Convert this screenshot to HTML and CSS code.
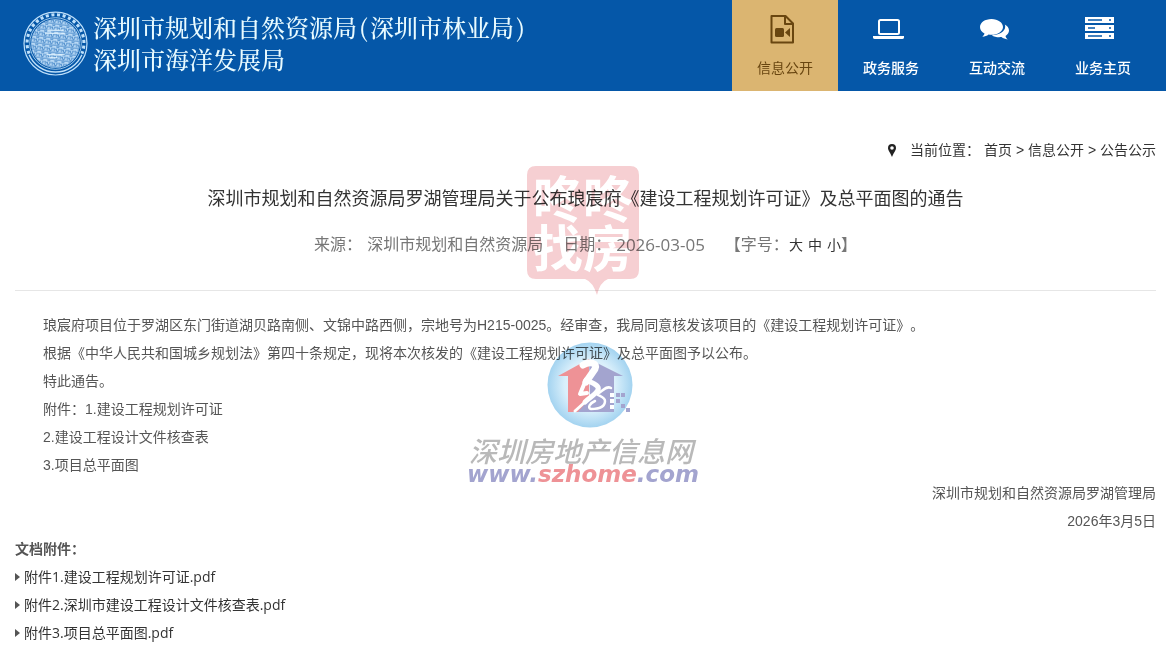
FILE: index.html
```html
<!DOCTYPE html>
<html lang="zh-CN">
<head>
<meta charset="utf-8">
<meta name="viewport" content="width=device-width, initial-scale=1">
<title>深圳市规划和自然资源局</title>
<link rel="stylesheet" href="styles.css">
</head>
<body>
<header class="site-header">
  <a class="brand" href="#">
    <svg class="seal" viewBox="0 0 64 64" aria-hidden="true">
      <defs>
        <pattern id="script" width="7" height="7" patternUnits="userSpaceOnUse" patternTransform="rotate(8)">
          <path d="M0 1h3v2h2v-2h2M1 5h2v1.500h2v-2h2M4 0v1.500M0 4h1v3M3 4v1" fill="none" stroke="#3f83c6" stroke-width=".8"/>
        </pattern>
      </defs>
      <g fill="none" stroke="#bfe0fa">
        <circle cx="32" cy="32" r="31" stroke-width="1.2"/>
        <circle cx="32" cy="32" r="25.4" stroke-width=".8"/>
        <path d="M6 42A28 28 0 1 1 58 42" stroke-width="3" stroke-dasharray="3 2.6"/>
        <path d="M6 43A28.300 28.300 0 0 0 58 43" stroke-width="1.400"/>
      </g>
      <circle cx="32" cy="32" r="24" fill="#b9d9f5"/>
      <circle cx="32" cy="32" r="24" fill="url(#script)"/>
      <path d="M24 19h16M22 22h19M23 43h18M25 46h9" stroke="#e6f6ff" stroke-width="1"/>
    </svg>
    <span class="brand-text">
      <span>深圳市规划和自然资源局<span class="paren">(</span>深圳市林业局<span class="paren">)</span></span>
      <span>深圳市海洋发展局</span>
    </span>
  </a>
  <nav class="main-nav">
    <a class="nav-item active" href="#">
      <svg viewBox="3 -1 32 32" aria-hidden="true"><path d="M5.500 3h14L27 10.500V29.500H5.500zM19 3v8h8" fill="none" stroke="currentColor" stroke-width="2" stroke-linejoin="round"/><rect x="9" y="15" width="9" height="9" rx="1.500" fill="currentColor"/><path d="M19 19.500l5-4.500v9z" fill="currentColor"/></svg>
      <span>信息公开</span>
    </a>
    <a class="nav-item" href="#">
      <svg viewBox="2 0 32 32" aria-hidden="true"><rect x="6" y="8" width="20" height="14" rx="1.500" fill="none" stroke="currentColor" stroke-width="2"/><path d="M0 24h31v1.500q0 1.500-3 1.500H3q-3 0-3-1.500z" fill="currentColor"/></svg>
      <span>政务服务</span>
    </a>
    <a class="nav-item" href="#">
      <svg viewBox="2 -1 32 32" aria-hidden="true"><path d="M12.500 6C6 6 1 9.600 1 14c0 2.700 1.700 5 4.500 6.500-.3 1.400-1.200 2.400-2.200 3.300 2.500-.1 4.700-1 6.300-2.300q1.400.3 2.900.3C19 21.800 24 18.300 24 14S19 6 12.500 6z" fill="currentColor"/><path d="M25.800 11.500c2.600 1.400 4.200 3.500 4.200 5.900 0 2.200-1.300 4.100-3.500 5.500.3 1.400 1.200 2.600 2.200 3.500-2.500-.1-4.600-1-6.200-2.300-3.600.5-7.200-.2-9.700-1.900 7.200 0 13.400-3.700 13.400-8.500q0-1.100-.4-2.200z" fill="currentColor"/></svg>
      <span>互动交流</span>
    </a>
    <a class="nav-item" href="#">
      <svg viewBox="3 0 32 32" aria-hidden="true"><path d="M1 5h29v6H1zM1 13h29v6H1zM1 21h29v6H1z" fill="currentColor"/><path d="M4 8h14M4 16h7M4 24h14M25 8h2M25 16h2M25 24h2" stroke="#0557a8" stroke-width="1.500"/></svg>
      <span>业务主页</span>
    </a>
  </nav>
</header>

<main class="page">
  <nav class="crumbs" aria-label="当前位置">
    <svg class="pin" viewBox="0 0 8 13" aria-hidden="true"><path d="M4 0a4 4 0 0 0-4 4c0 2.500 2.200 4.500 4 9 1.800-4.500 4-6.500 4-9a4 4 0 0 0-4-4zm0 2.200a1.800 1.800 0 1 1 0 3.600 1.800 1.800 0 0 1 0-3.600z" fill="#222" fill-rule="evenodd"/></svg>
    <span class="crumb-label">当前位置：</span>
    <a href="#">首页</a><span class="sep">&gt;</span><a href="#">信息公开</a><span class="sep">&gt;</span><a href="#">公告公示</a>
  </nav>

  <article>
    <h1>深圳市规划和自然资源局罗湖管理局关于公布琅宸府《建设工程规划许可证》及总平面图的通告</h1>
    <div class="meta">
      <span class="meta-pair"><span>来源：</span><span>深圳市规划和自然资源局</span></span>
      <span class="meta-pair"><span>日期：</span><time class="date">2026-03-05</time></span>
      <span class="sizes">【字号：<button type="button">大</button><button type="button">中</button><button type="button">小</button>】</span>
    </div>
    <div class="content">
      <p>琅宸府项目位于罗湖区东门街道湖贝路南侧、文锦中路西侧，宗地号为H215-0025。经审查，我局同意核发该项目的《建设工程规划许可证》。</p>
      <p>根据《中华人民共和国城乡规划法》第四十条规定，现将本次核发的《建设工程规划许可证》及总平面图予以公布。</p>
      <p>特此通告。</p>
      <p>附件：1.建设工程规划许可证</p>
      <p>2.建设工程设计文件核查表</p>
      <p>3.项目总平面图</p>
    </div>
    <div class="signature">
      <p>深圳市规划和自然资源局罗湖管理局</p>
      <p>2026年3月5日</p>
    </div>
    <section class="files">
      <h2>文档附件：</h2>
      <ul>
        <li><a href="#">附件1.建设工程规划许可证.pdf</a></li>
        <li><a href="#">附件2.深圳市建设工程设计文件核查表.pdf</a></li>
        <li><a href="#">附件3.项目总平面图.pdf</a></li>
      </ul>
    </section>
  </article>
</main>

<svg class="mark stamp" viewBox="0 0 112 130">
  <path d="M9 0h94q9 0 9 9v95q0 9-9 9H81q-8 3-11 16-4-13-12-16H9q-9 0-9-9V9q0-9 9-9z" fill="#f6cfd2"/>
  <g class="stamp-text"><text x="6" y="52">咚咚</text><text x="6" y="101">找房</text></g>
</svg>

<svg class="mark szhome" viewBox="0 0 234 146">
  <defs>
    <radialGradient id="globe" cx=".5" cy=".5" r=".5">
      <stop offset="0" stop-color="#f4fbff"/><stop offset=".6" stop-color="#d9effb"/><stop offset="1" stop-color="#a3d3f0"/>
    </radialGradient>
  </defs>
  <circle cx="124" cy="43" r="42.500" fill="url(#globe)"/>
  <path d="M92 34l31-17v53h-21V34z" fill="#ee9296"/>
  <path d="M123 17l34 17h-9v36h-36l12-14z" fill="#a3a4cf"/>
  <g fill="none" stroke="#fff" stroke-linecap="round" stroke-linejoin="round">
    <path d="M117 23c7-4 15-2 12 4l-9 13" stroke-width="7"/>
    <path d="M120 38c6 3 14 5 12 10-3 5-9 8-13 12" stroke-width="5"/>
    <path d="M119 60l-10 9" stroke-width="3"/>
    <path d="M119 40l-5 12 7-1" stroke-width="4"/>
    <path d="M145 46c-5-3-9 4-14 6 2 2 8 3 8 7 0 7-8 8-14 8-4-1-1-6 4-8" stroke-width="2.500"/>
  </g>
  <path d="M144 51h4v4h-4zM144 57h4v4h-4zM144 63h4v4h-4z" fill="#fff"/>
  <path d="M150 51h4v4h-4zM155 51h4v4h-4zM150 57h4v4h-4zM155 62h4v4h-4zM160 66h4v4h-4z" fill="#a3a4cf"/>
  <text class="mark-name" x="3" y="120">深圳房地产信息网</text>
  <text class="mark-url" x="1" y="140">www.<tspan class="red">szhome</tspan>.com</text>
</svg>
</body>
</html>
```
FILE: styles.css
```css
* { box-sizing: border-box; }

body {
  margin: 0;
  position: relative;
  background: #fff;
  color: #555;
  font: 14px/28px "Liberation Sans", "Noto Sans CJK SC", sans-serif;
  text-spacing-trim: space-all;
}

a { color: inherit; text-decoration: none; }
h1, h2, p, ul { margin: 0; padding: 0; font-weight: 400; }

.site-header {
  display: flex;
  justify-content: space-between;
  min-height: 91px;
  padding: 0 10px 0 23px;
  background: #0557a8;
  color: #fff;
}

.brand { display: flex; align-items: flex-start; gap: 5px; padding-top: 11px; }
.seal { width: 65px; height: 65px; }
.brand-text {
  display: flex;
  flex-direction: column;
  color: #e9fbff;
  font: 500 24px/32px "Noto Serif CJK SC", "Noto Sans CJK SC", serif;
}
.paren { padding: 0 2px; }

.main-nav { display: flex; }
.nav-item {
  display: flex;
  flex-direction: column;
  align-items: center;
  gap: 10px;
  width: 106px;
  padding-top: 12px;
  font-weight: 500;
}
.nav-item svg { width: 32px; height: 32px; overflow: visible; }
.nav-item.active { background: #dbb571; color: #694610; font-weight: 400; }

.page { padding: 45px 10px 0 15px; }

.crumbs {
  display: flex;
  align-items: center;
  justify-content: flex-end;
  color: #333;
}
.pin { width: 8px; height: 13px; margin-right: 14px; }
.crumb-label { margin-right: 4px; }
.sep { width: 16px; text-align: center; }

h1 {
  margin-top: 17px;
  color: #333;
  font-size: 18px;
  line-height: 36px;
  text-align: center;
}

.meta {
  display: flex;
  flex-wrap: wrap;
  justify-content: center;
  gap: 20px;
  margin-top: 14px;
  padding-bottom: 31px;
  border-bottom: 1px solid #e6e6e6;
  color: #777;
  font-size: 16px;
}
.meta-pair { display: flex; gap: 5px; }
.date { font-family: "Open Sans", sans-serif; font-size: 17px; }
.sizes { display: flex; }
.sizes button {
  padding: 0;
  border: 0;
  background: none;
  color: #333;
  font: inherit;
  font-size: 14px;
}
.sizes button + button { margin-left: 5px; }

.content { padding: 20px 28px 0; }
.signature { text-align: right; }

.files { color: #333; font-family: "Open Sans", "Noto Sans CJK SC", sans-serif; }
.files h2 { color: #555; font-size: 14px; font-weight: 700; }
.files ul { list-style: none; }
.files li { display: flex; align-items: center; gap: 4px; }
.files li::before {
  content: "";
  border: solid transparent;
  border-width: 4px 0 4px 5px;
  border-left-color: #555;
}

.mark {
  position: absolute;
  left: 50%;
  mix-blend-mode: multiply;
  pointer-events: none;
  transform: translateX(-50%);
}
.stamp { top: 166px; width: 112px; height: 130px; }
.stamp-text { fill: #fff; font: 700 50px "Noto Sans CJK SC", sans-serif; }
.szhome { top: 342px; width: 234px; height: 146px; }
.mark-name { fill: #b9b9b9; font: italic 500 28px "Noto Sans CJK SC", sans-serif; }
.mark-url { fill: #a3a4cf; font: italic 700 23px "DejaVu Sans", sans-serif; }
.red { fill: #ee9296; }
```
